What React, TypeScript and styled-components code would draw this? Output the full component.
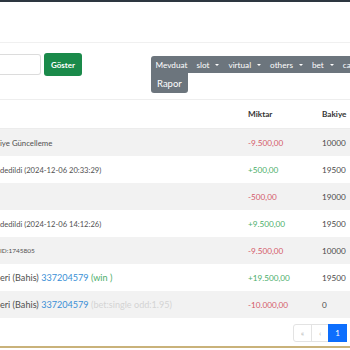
import { createGlobalStyle } from "styled-components";
import styled from "styled-components";

const GlobalStyle = createGlobalStyle`
  html, body {
    margin: 0;
    padding: 0;
    width: 350px;
    height: 350px;
    overflow: hidden;
    background: #fff;
    font-family: Lato, "Noto Sans", sans-serif;
  }
`;

const Page = styled.div`
  width: 350px;
  height: 350px;
  display: flex;
  flex-direction: column;
  overflow: hidden;
`;

const TopBar = styled.div`
  height: 2px;
  background: #2d3640;
  flex: none;
`;

const HeaderSpace = styled.div`
  height: 40px;
  flex: none;
  border-bottom: 1px solid #f0f0f0;
`;

const FilterRow = styled.div`
  height: 57px;
  flex: none;
  display: flex;
  align-items: flex-start;
  padding-top: 10px;
  box-sizing: border-box;
  border-bottom: 1px solid #eeeeee;
  & > * {
    flex: none;
  }
`;

const DateInput = styled.div`
  width: 41px;
  height: 21px;
  margin-top: 1px;
  box-sizing: border-box;
  border: 1px solid #dcdcdc;
  border-left: none;
  border-radius: 0 3px 3px 0;
`;

const ShowButton = styled.button`
  margin-left: 3px;
  width: 38px;
  height: 23px;
  border: none;
  border-radius: 3px;
  background: #1a8a4a;
  color: #fff;
  font-family: inherit;
  font-weight: 700;
  font-size: 8px;
  padding: 0;
`;

const MenuGroup = styled.div`
  margin-left: 69px;
  margin-top: 3px;
  width: 245px;
  display: flex;
  flex-wrap: wrap;
`;

const MenuButton = styled.div<{ $tall?: boolean }>`
  display: flex;
  align-items: center;
  gap: 6px;
  height: ${(p) => (p.$tall ? "20px" : "17px")};
  padding: 0 ${(p) => (p.$tall ? "6px" : "4.5px")};
  background: #6c757d;
  color: #fff;
  font-size: ${(p) => (p.$tall ? "9.5px" : "8.2px")};
  border-radius: ${(p) => (p.$tall ? "0 0 3px 3px" : "0")};
  &:first-child {
    border-top-left-radius: 3px;
  }
`;

const Caret = styled.span`
  width: 0;
  height: 0;
  border-left: 2px solid transparent;
  border-right: 2px solid transparent;
  border-top: 2.5px solid #fff;
`;

const Table = styled.table`
  width: 420px;
  border-collapse: collapse;
  flex: none;
  font-size: 8px;
  color: #4a4a4a;
  table-layout: fixed;
`;

const HeadCell = styled.th<{ $w: number }>`
  width: ${(p) => p.$w}px;
  height: 28px;
  padding: 0 6px;
  text-align: left;
  font-weight: 700;
  font-size: 8.2px;
  color: #333;
  border-bottom: 1px solid #ececec;
  &:first-child {
    padding-left: 0;
  }
`;

const Row = styled.tr<{ $striped: boolean }>`
  background: ${(p) => (p.$striped ? "#f2f2f2" : "#fff")};
`;

const Cell = styled.td<{ $size?: number }>`
  height: 27px;
  padding: 0 6px;
  white-space: nowrap;
  overflow: hidden;
  font-size: ${(p) => p.$size ?? 8.2}px;
  &:first-child {
    padding-left: 0;
    color: #505050;
  }
`;

const Amount = styled.span<{ $positive: boolean }>`
  color: ${(p) => (p.$positive ? "#4cae6a" : "#d45a6a")};
`;

const BetLink = styled.span`
  color: #3a8fd6;
`;

const Win = styled.span`
  color: #4cae6a;
`;

const Muted = styled.span`
  color: #d4d4d4;
`;

const PagerRow = styled.div`
  width: 347px;
  flex: none;
  display: flex;
  justify-content: flex-end;
  margin-top: 6px;
`;

const PageItem = styled.div<{ $active?: boolean; $w: number }>`
  width: ${(p) => p.$w}px;
  height: 18px;
  box-sizing: border-box;
  display: flex;
  align-items: center;
  justify-content: center;
  font-size: 8px;
  border: 1px solid ${(p) => (p.$active ? "#0d6efd" : "#e3e3e3")};
  background: ${(p) => (p.$active ? "#0d6efd" : "#fff")};
  color: ${(p) => (p.$active ? "#fff" : "#b5b5b5")};
  margin-left: -1px;
  &:first-child {
    border-radius: 3px 0 0 3px;
  }
`;

const Footer = styled.div`
  margin-top: 4px;
  height: 2px;
  background: #c9b27a;
  flex: none;
`;

type Tx = {
  desc: React.ReactNode;
  size: number;
  amount: string;
  positive: boolean;
  balance: string;
};

const rows: Tx[] = [
  { desc: "iye Güncelleme", size: 7.8, amount: "-9.500,00", positive: false, balance: "10000" },
  { desc: "dedildi (2024-12-06 20:33:29)", size: 7.6, amount: "+500,00", positive: true, balance: "19500" },
  { desc: "", size: 7.6, amount: "-500,00", positive: false, balance: "19000" },
  { desc: "dedildi (2024-12-06 14:12:26)", size: 7.6, amount: "+9.500,00", positive: true, balance: "19500" },
  { desc: "ID:1745805", size: 6.5, amount: "-9.500,00", positive: false, balance: "10000" },
  {
    desc: (
      <>
        eri (Bahis) <BetLink>337204579</BetLink> <Win>(win )</Win>
      </>
    ),
    size: 9.1,
    amount: "+19.500,00",
    positive: true,
    balance: "19500",
  },
  {
    desc: (
      <>
        eri (Bahis) <BetLink>337204579</BetLink> <Muted>(bet:single odd:1.95)</Muted>
      </>
    ),
    size: 9.1,
    amount: "-10.000,00",
    positive: false,
    balance: "0",
  },
];

const menus = [
  { label: "Mevduat", caret: false },
  { label: "slot", caret: true },
  { label: "virtual", caret: true },
  { label: "others", caret: true },
  { label: "bet", caret: true },
  { label: "casino", caret: true },
];

export default function App() {
  return (
    <Page>
      <GlobalStyle />
      <TopBar />
      <HeaderSpace />
      <FilterRow>
        <DateInput />
        <ShowButton>Göster</ShowButton>
        <MenuGroup>
          {menus.map((m) => (
            <MenuButton key={m.label}>
              {m.label}
              {m.caret && <Caret />}
            </MenuButton>
          ))}
          <MenuButton $tall>Rapor</MenuButton>
        </MenuGroup>
      </FilterRow>
      <Table>
        <thead>
          <tr>
            <HeadCell $w={236}></HeadCell>
            <HeadCell $w={62}>Miktar</HeadCell>
            <HeadCell $w={92}>Bakiye</HeadCell>
          </tr>
        </thead>
        <tbody>
          {rows.map((r, i) => (
            <Row key={i} $striped={i % 2 === 0}>
              <Cell $size={r.size}>{r.desc}</Cell>
              <Cell>
                <Amount $positive={r.positive}>{r.amount}</Amount>
              </Cell>
              <Cell>{r.balance}</Cell>
            </Row>
          ))}
        </tbody>
      </Table>
      <PagerRow>
        <PageItem $w={19}>«</PageItem>
        <PageItem $w={18}>‹</PageItem>
        <PageItem $w={19} $active>
          1
        </PageItem>
      </PagerRow>
      <Footer />
    </Page>
  );
}
